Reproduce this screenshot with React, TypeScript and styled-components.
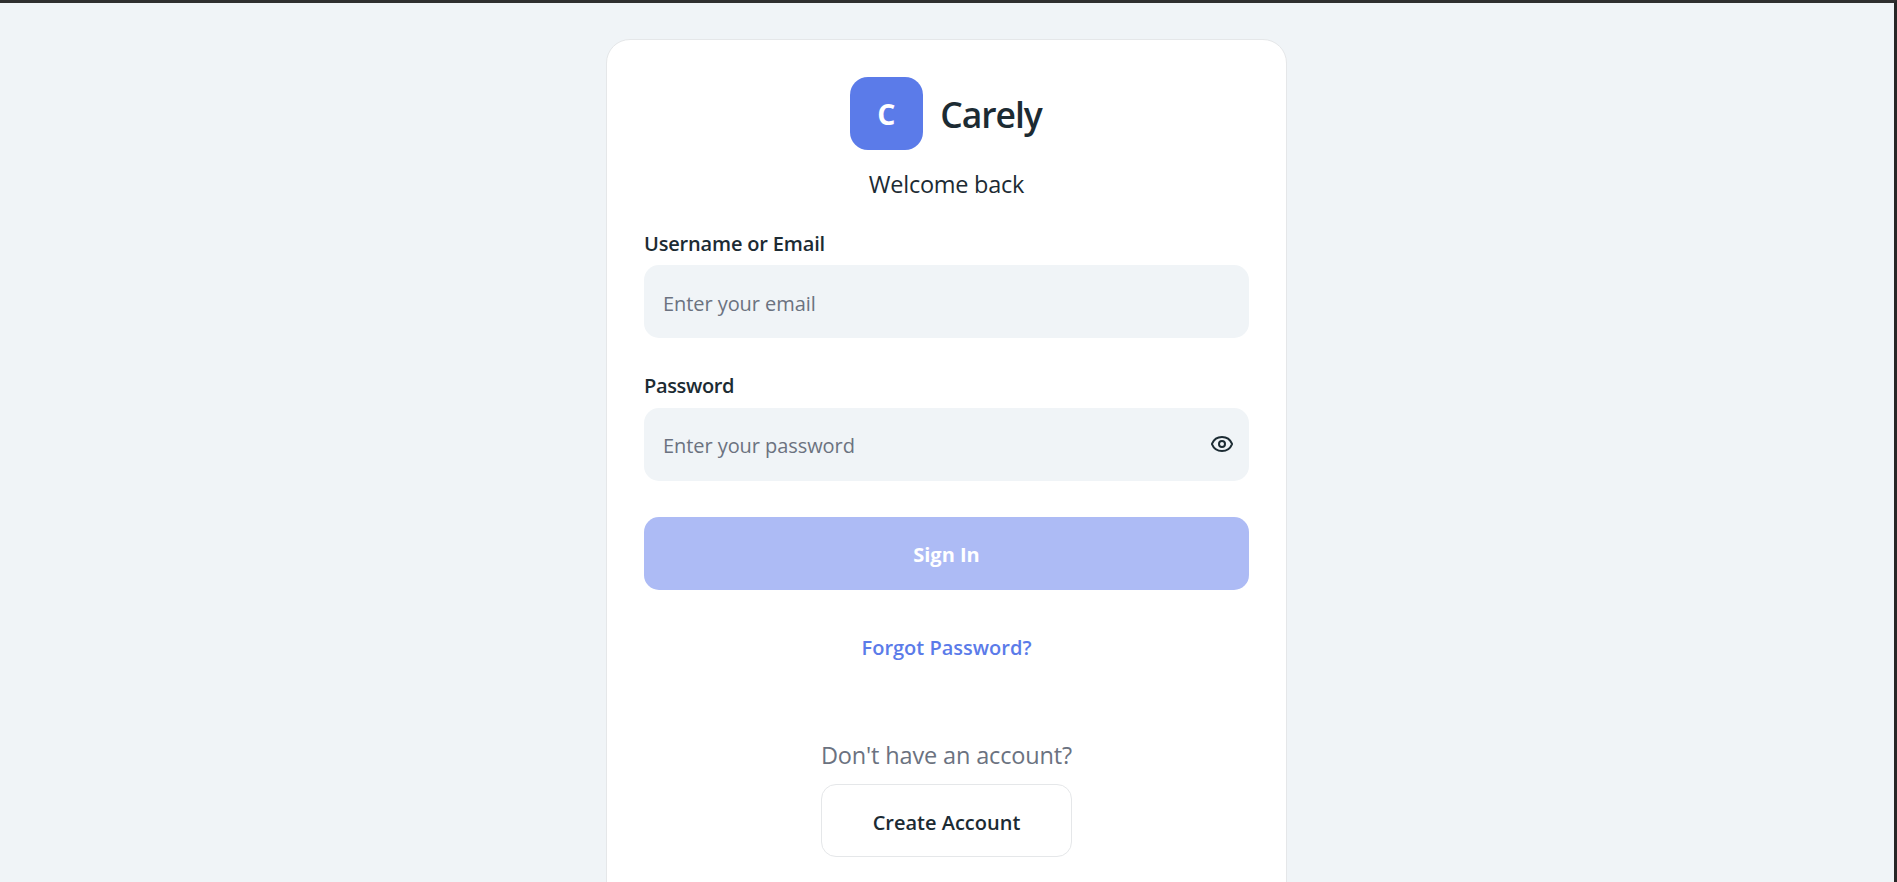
import React from "react";
import styled, { createGlobalStyle } from "styled-components";
import { Eye } from "lucide-react";

const GlobalStyle = createGlobalStyle`
  * { box-sizing: border-box; }
  html, body { margin: 0; padding: 0; overflow: hidden; }
  body, input, button { font-family: "Segoe UI", "Open Sans", "Noto Sans", sans-serif; }
`;

const ink = "#1c2b33";
const muted = "#6b7280";
const brand = "#5b7be9";
const surface = "#f0f4f7";

const Page = styled.main`
  display: flex;
  justify-content: center;
  align-items: flex-start;
  height: 882px;
  padding: 36px 1px 0 0;
  overflow: hidden;
  background: ${surface};
  border-top: 3px solid #2f2f2f;
  border-right: 3px solid #262626;
`;

const Card = styled.section`
  display: flex;
  flex-direction: column;
  flex: none;
  width: 681px;
  height: 920px;
  padding: 37px;
  background: #ffffff;
  border: 1px solid #e5e7e9;
  border-radius: 24px;
`;

const Brand = styled.header`
  display: flex;
  justify-content: center;
  align-items: center;
  gap: 17px;
`;

const Logo = styled.div`
  display: flex;
  justify-content: center;
  align-items: center;
  width: 73px;
  height: 73px;
  padding-right: 1px;
  border-radius: 18px;
  background: ${brand};
  color: #ffffff;
  font-size: 28.5px;
  font-weight: 700;
  line-height: 40px;
`;

const Title = styled.h1`
  margin: 0;
  padding-right: 1px;
  color: ${ink};
  font-size: 35.5px;
  font-weight: 600;
  line-height: 48px;
  letter-spacing: -1.05px;
`;

const Welcome = styled.p`
  margin: 16px 0 27px;
  color: ${ink};
  font-size: 23.5px;
  line-height: 37px;
  letter-spacing: -0.25px;
  text-align: center;
`;

const Form = styled.form`
  display: flex;
  flex-direction: column;
`;

const Field = styled.div<{ $gap: number; $after: number }>`
  display: flex;
  flex-direction: column;
  gap: ${(p) => p.$gap}px;
  margin-bottom: ${(p) => p.$after}px;
`;

const Label = styled.label<{ $tracking: number }>`
  color: ${ink};
  font-size: 20px;
  font-weight: 600;
  line-height: 28px;
  letter-spacing: ${(p) => p.$tracking}px;
`;

const InputShell = styled.div`
  display: flex;
  align-items: center;
  height: 73px;
  padding: 0 15px 0 19px;
  border-radius: 15px;
  background: ${surface};
`;

const Input = styled.input<{ $drop: number }>`
  flex: 1;
  min-width: 0;
  height: 73px;
  padding: ${(p) => p.$drop}px 0 0;
  border: 0;
  outline: 0;
  background: transparent;
  color: ${ink};
  font-size: 20px;
  letter-spacing: -0.07px;
  &::placeholder { color: ${muted}; opacity: 1; }
`;

const Reveal = styled.button`
  display: flex;
  padding: 0 0 2px;
  border: 0;
  background: transparent;
  color: ${ink};
`;

const SignIn = styled.button`
  height: 73px;
  padding: 1px 0 0;
  border: 0;
  border-radius: 15px;
  background: #adbbf5;
  color: #ffffff;
  font-size: 20px;
  font-weight: 700;
`;

const Forgot = styled.a`
  align-self: center;
  margin-top: 43px;
  color: ${brand};
  font-size: 20px;
  font-weight: 600;
  line-height: 30px;
  text-decoration: none;
`;

const SignUp = styled.footer`
  display: flex;
  flex-direction: column;
  align-items: center;
  gap: 11px;
  margin-top: 74px;
`;

const Prompt = styled.p`
  margin: 0;
  color: ${muted};
  font-size: 23.5px;
  line-height: 36px;
  letter-spacing: -0.15px;
`;

const Create = styled.button`
  width: 251px;
  height: 73px;
  padding: 3px 0 0;
  border: 1px solid #e5e7e9;
  border-radius: 15px;
  background: #ffffff;
  color: ${ink};
  font-size: 20px;
  font-weight: 600;
`;

export default function App() {
  return (
    <>
      <GlobalStyle />
      <Page>
        <Card>
          <Brand>
            <Logo>C</Logo>
            <Title>Carely</Title>
          </Brand>
          <Welcome>Welcome back</Welcome>
          <Form>
            <Field $gap={7} $after={34}>
              <Label htmlFor="email" $tracking={-0.17}>Username or Email</Label>
              <InputShell>
                <Input id="email" type="text" placeholder="Enter your email" $drop={4} />
              </InputShell>
            </Field>
            <Field $gap={8} $after={36}>
              <Label htmlFor="password" $tracking={-0.36}>Password</Label>
              <InputShell>
                <Input id="password" type="password" placeholder="Enter your password" $drop={2} />
                <Reveal type="button" aria-label="Show password">
                  <Eye size={24} strokeWidth={2} />
                </Reveal>
              </InputShell>
            </Field>
            <SignIn type="button">Sign In</SignIn>
          </Form>
          <Forgot href="#">Forgot Password?</Forgot>
          <SignUp>
            <Prompt>Don't have an account?</Prompt>
            <Create type="button">Create Account</Create>
          </SignUp>
        </Card>
      </Page>
    </>
  );
}
